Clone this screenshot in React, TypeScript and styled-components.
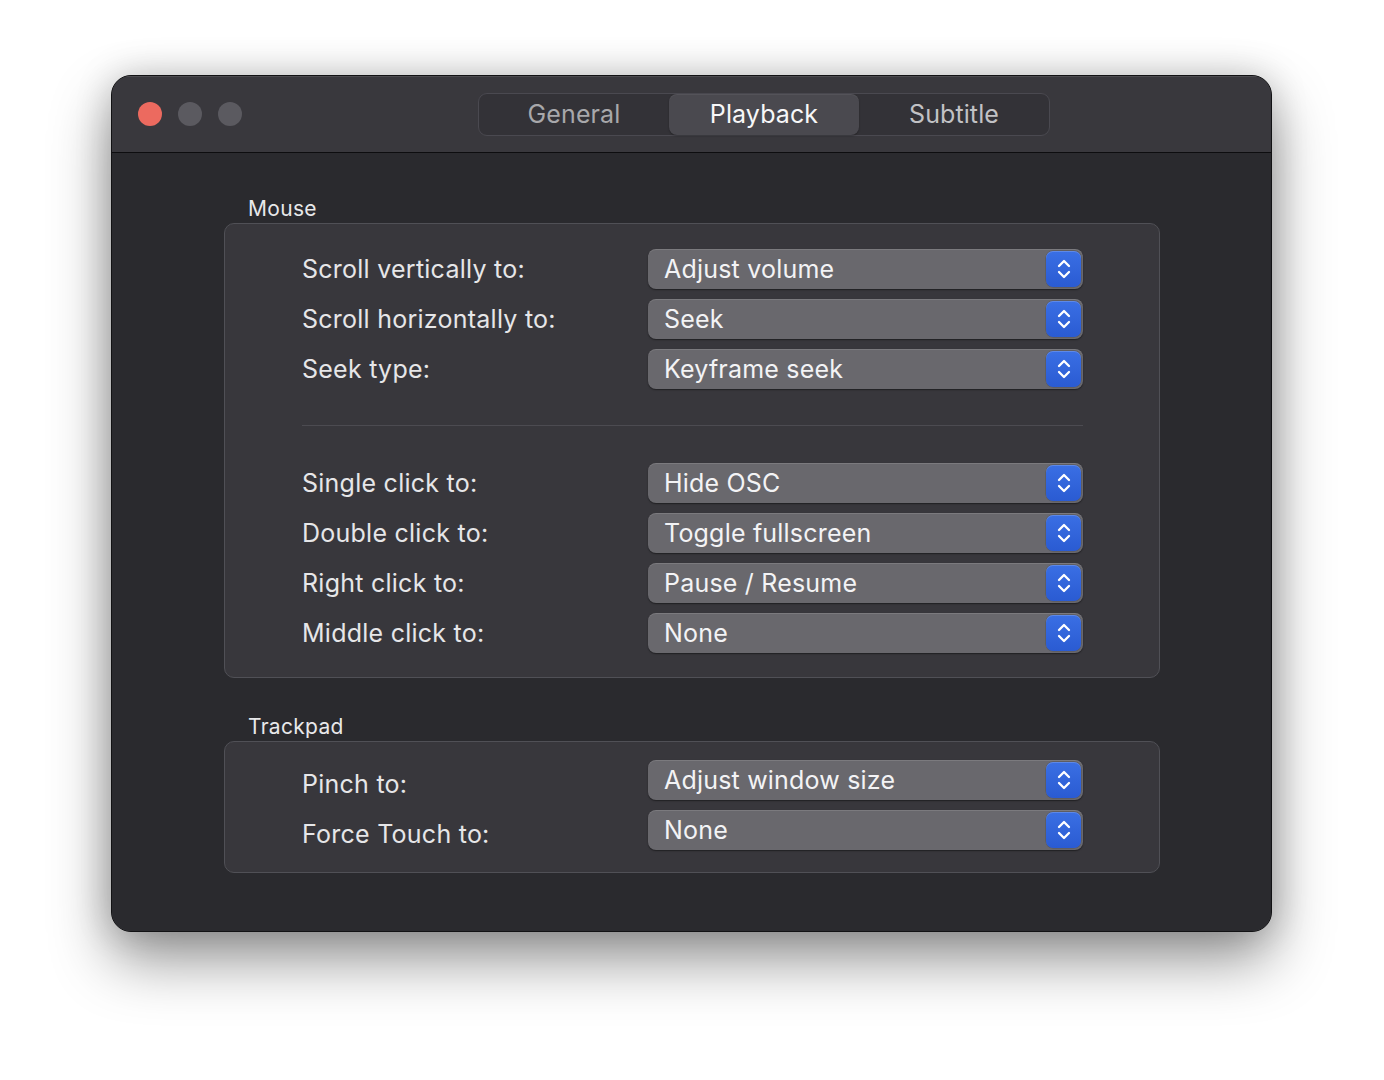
import React from "react";
import styled, { createGlobalStyle } from "styled-components";

const GlobalStyle = createGlobalStyle`
  html, body {
    margin: 0;
    padding: 0;
    background: #ffffff;
  }
  body {
    font-family: Inter, "Noto Sans", "Liberation Sans", sans-serif;
    -webkit-font-smoothing: antialiased;
  }
`;

const Stage = styled.div`
  width: 1384px;
  height: 1080px;
  box-sizing: border-box;
  padding: 75px 0 0 111px;
  background: #ffffff;
`;

const Window = styled.div`
  width: 1161px;
  height: 857px;
  box-sizing: border-box;
  border: 1px solid #121214;
  border-radius: 20px;
  overflow: hidden;
  display: flex;
  flex-direction: column;
  background: #2a2a2e;
  box-shadow: 0 28px 60px rgba(0, 0, 0, 0.42), 0 0 36px rgba(0, 0, 0, 0.18),
    inset 0 0 0 1px rgba(255, 255, 255, 0.14);
`;

const TitleBar = styled.div`
  height: 77px;
  box-sizing: border-box;
  flex: none;
  display: flex;
  align-items: center;
  padding-left: 26px;
  background: #39383d;
  border-bottom: 1px solid #0d0d0f;
  box-shadow: inset 0 1px 0 rgba(255, 255, 255, 0.1);
`;

const Lights = styled.div`
  display: flex;
  gap: 16px;
`;

const Light = styled.span<{ $color: string }>`
  width: 24px;
  height: 24px;
  border-radius: 50%;
  background: ${(p) => p.$color};
`;

const Segmented = styled.div`
  margin-left: 236px;
  display: flex;
  height: 43px;
  box-sizing: border-box;
  border: 1px solid #4a4950;
  border-radius: 9px;
  background: #333237;
`;

const Segment = styled.div<{ $active?: boolean; $tone: string }>`
  width: 190px;
  display: flex;
  align-items: center;
  justify-content: center;
  font-size: 25px;
  letter-spacing: 0.1px;
  padding-bottom: 1px;
  color: ${(p) => p.$tone};
  border-radius: 8px;
  background: ${(p) => (p.$active ? "#4a494f" : "transparent")};
  box-shadow: ${(p) =>
    p.$active ? "0 1px 2px rgba(0,0,0,0.3), inset 0 1px 0 rgba(255,255,255,0.06)" : "none"};
`;

const Content = styled.div`
  flex: 1;
  padding: 43px 0 0 112px;
  background: #2a2a2e;
`;

const GroupTitle = styled.div<{ $spaced?: boolean }>`
  height: 26px;
  line-height: 26px;
  padding-left: 24px;
  margin-top: ${(p) => (p.$spaced ? "36px" : "0")};
  margin-bottom: 1px;
  font-size: 21px;
  letter-spacing: 0.3px;
  color: #e8e8ea;
`;

const GroupBox = styled.div<{ $pt: number; $pb: number }>`
  width: 936px;
  box-sizing: border-box;
  border: 1px solid #505056;
  border-radius: 10px;
  background: #38373c;
  padding: ${(p) => p.$pt}px 76px ${(p) => p.$pb}px 77px;
  display: flex;
  flex-direction: column;
  gap: 10px;
`;

const Row = styled.div`
  display: grid;
  grid-template-columns: 346px 435px;
  align-items: center;
  height: 40px;
`;

const Label = styled.div<{ $shift?: number }>`
  font-size: 25px;
  letter-spacing: 0.25px;
  color: #e6e6e8;
  white-space: nowrap;
  transform: translateY(${(p) => p.$shift || 0}px);
`;

const Popup = styled.div`
  position: relative;
  height: 40px;
  box-sizing: border-box;
  border-radius: 8px;
  background: #69686d;
  display: flex;
  align-items: center;
  padding-left: 16px;
  padding-bottom: 1px;
  font-size: 25px;
  letter-spacing: 0.2px;
  color: #f3f3f5;
  box-shadow: 0 1px 1.5px rgba(0, 0, 0, 0.45), inset 0 1px 0 rgba(255, 255, 255, 0.12);
`;

const Stepper = styled.div`
  position: absolute;
  right: 2px;
  top: 2px;
  width: 35px;
  height: 36px;
  border-radius: 7px;
  background: linear-gradient(#3a6fe4, #2a5bd2);
  box-shadow: inset 0 1px 0 rgba(255, 255, 255, 0.18), 0 0 0 0.5px rgba(0, 0, 0, 0.2);
  display: flex;
  align-items: center;
  justify-content: center;
`;

const Divider = styled.div`
  width: 781px;
  height: 1px;
  background: #4c4b51;
  margin: 26px 0 27px;
`;

const Chevrons = () => (
  <svg width="16" height="24" viewBox="0 0 16 24" fill="none">
    <path d="M3 9 L8 4 L13 9" stroke="#fff" strokeWidth="2.3" strokeLinecap="round" strokeLinejoin="round" />
    <path d="M3 15 L8 20 L13 15" stroke="#fff" strokeWidth="2.3" strokeLinecap="round" strokeLinejoin="round" />
  </svg>
);

const Select = ({ value }: { value: string }) => (
  <Popup>
    {value}
    <Stepper>
      <Chevrons />
    </Stepper>
  </Popup>
);

const Field = ({ label, value, shift }: { label: string; value: string; shift?: number }) => (
  <Row>
    <Label $shift={shift}>{label}</Label>
    <Select value={value} />
  </Row>
);

export default function App() {
  return (
    <>
      <GlobalStyle />
      <Stage>
        <Window>
          <TitleBar>
            <Lights>
              <Light $color="#ec6a5f" />
              <Light $color="#5b5a60" />
              <Light $color="#5b5a60" />
            </Lights>
            <Segmented>
              <Segment $tone="#a8a8ab">General</Segment>
              <Segment $active $tone="#f7f7f8">Playback</Segment>
              <Segment $tone="#c2c2c5">Subtitle</Segment>
            </Segmented>
          </TitleBar>
          <Content>
            <GroupTitle>Mouse</GroupTitle>
            <GroupBox $pt={25} $pb={24}>
              <Field label="Scroll vertically to:" value="Adjust volume" />
              <Field label="Scroll horizontally to:" value="Seek" />
              <Field label="Seek type:" value="Keyframe seek" />
              <Divider />
              <Field label="Single click to:" value="Hide OSC" />
              <Field label="Double click to:" value="Toggle fullscreen" />
              <Field label="Right click to:" value="Pause / Resume" />
              <Field label="Middle click to:" value="None" />
            </GroupBox>
            <GroupTitle $spaced>Trackpad</GroupTitle>
            <GroupBox $pt={18} $pb={22}>
              <Field label="Pinch to:" value="Adjust window size" shift={4} />
              <Field label="Force Touch to:" value="None" shift={4} />
            </GroupBox>
          </Content>
        </Window>
      </Stage>
    </>
  );
}
